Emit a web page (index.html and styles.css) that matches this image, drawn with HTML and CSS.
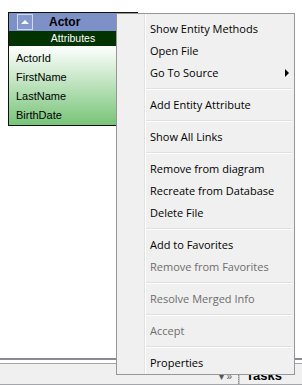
FILE: index.html
```html
<!DOCTYPE html>
<html lang="en">
<head>
    <meta charset="UTF-8">
    <title>Diagram - Actor</title>
    <link rel="stylesheet" href="styles.css">
</head>
<body>

    <div class="canvas">
        <!-- Entity node -->
        <div class="entity">
            <div class="entity-head">
                <span class="collapse-btn"><span class="tri-up"></span></span>
                <span class="entity-title">Actor</span>
            </div>
            <div class="entity-section">Attributes</div>
            <div class="entity-rows">
                <div class="entity-row">ActorId</div>
                <div class="entity-row">FirstName</div>
                <div class="entity-row">LastName</div>
                <div class="entity-row">BirthDate</div>
            </div>
        </div>
    </div>

    <!-- Dock at the bottom -->
    <div class="dock">
        <div class="dock-panel">
            <span class="dock-glyph">&#9662;</span>
            <span class="dock-glyph">&raquo;</span>
            <span class="dock-sep"></span>
            <span class="dock-tab">Tasks</span>
        </div>
    </div>

    <!-- Context menu -->
    <ul class="context-menu">
        <li class="menu-item">Show Entity Methods</li>
        <li class="menu-item">Open File</li>
        <li class="menu-item has-sub">Go To Source</li>
        <li class="menu-sep"></li>
        <li class="menu-item">Add Entity Attribute</li>
        <li class="menu-sep"></li>
        <li class="menu-item">Show All Links</li>
        <li class="menu-sep"></li>
        <li class="menu-item">Remove from diagram</li>
        <li class="menu-item">Recreate from Database</li>
        <li class="menu-item">Delete File</li>
        <li class="menu-sep"></li>
        <li class="menu-item">Add to Favorites</li>
        <li class="menu-item disabled">Remove from Favorites</li>
        <li class="menu-sep"></li>
        <li class="menu-item disabled">Resolve Merged Info</li>
        <li class="menu-sep"></li>
        <li class="menu-item disabled">Accept</li>
        <li class="menu-sep"></li>
        <li class="menu-item">Properties</li>
    </ul>

</body>
</html>
```

FILE: styles.css
```css
/* General */
body {
    margin: 0;
    height: 385px;
    overflow: hidden;
    display: flex;
    flex-direction: column;
    background: #ffffff;
    font-family: 'Liberation Sans', Arial, sans-serif;
    position: relative;
}

.canvas {
    flex: 1;
    position: relative;
    background: #ffffff;
}

/* Entity node */
.entity {
    position: absolute;
    left: 8px;
    top: 12px;
    width: 128px;
    border: 1px solid #111111;
}

.entity-head {
    height: 18px;
    background: #7d90c8;
    display: flex;
    align-items: center;
    padding-left: 8px;
}

.collapse-btn {
    width: 14px;
    height: 14px;
    border: 1px solid #d2d9ef;
    background: #8598cd;
    display: flex;
    align-items: center;
    justify-content: center;
}

.tri-up {
    width: 0;
    height: 0;
    border-left: 4px solid transparent;
    border-right: 4px solid transparent;
    border-bottom: 4px solid #ffffff;
    margin-top: -1px;
}

.entity-title {
    margin-left: 16px;
    font-size: 12px;
    font-weight: bold;
    color: #000000;
}

.entity-section {
    height: 15px;
    line-height: 15px;
    background: #013301;
    color: #ffffff;
    font-size: 10.5px;
    text-align: center;
}

.entity-rows {
    padding-top: 3px;
    background: linear-gradient(to bottom, #ffffff, #78c478);
}

.entity-row {
    height: 19px;
    line-height: 19px;
    padding-left: 7px;
    font-size: 11px;
    color: #000000;
}

/* Dock */
.dock {
    border-top: 2px solid #8a8a92;
    padding-top: 3px;
    background: #ffffff;
}

.dock-panel {
    height: 20px;
    border-top: 1px solid #a4a4ac;
    border-bottom: 1px solid #a4a4ac;
    background: #f0f0f0;
    display: flex;
    align-items: flex-end;
    justify-content: flex-end;
    padding-right: 20px;
}

.dock-glyph {
    font-size: 10px;
    color: #555555;
    margin-left: 3px;
    line-height: 14px;
}

.dock-sep {
    width: 1px;
    height: 10px;
    background: #c8c8c8;
    margin: 0 6px 0 6px;
    border-left: 1px dotted #888888;
}

.dock-tab {
    font-size: 13px;
    font-weight: bold;
    line-height: 16px;
    color: #000000;
}

/* Context menu */
.context-menu {
    position: absolute;
    left: 116px;
    top: 13px;
    width: 177px;
    margin: 0;
    padding: 4px 0 0 0;
    list-style: none;
    background: #f0f0f0 linear-gradient(to right, transparent 27px, #e2e3e3 27px, #e2e3e3 28px, #ffffff 28px, #ffffff 29px, transparent 29px);
    border: 1px solid #979797;
    font-family: 'Open Sans', 'Noto Sans', sans-serif;
    font-size: 11px;
    color: #000000;
    z-index: 5;
}

.menu-item {
    position: relative;
    height: 22px;
    line-height: 22px;
    padding-left: 33px;
    white-space: nowrap;
}

.menu-item.disabled {
    color: #6d6d6d;
}

.menu-item.has-sub::after {
    content: "";
    position: absolute;
    right: 5px;
    top: 7px;
    border-top: 4px solid transparent;
    border-bottom: 4px solid transparent;
    border-left: 4px solid #000000;
}

.menu-sep {
    height: 10px;
    margin-left: 29px;
    margin-right: 2px;
    background: linear-gradient(to bottom, transparent 4px, #e0e0e0 4px, #e0e0e0 5px, #ffffff 5px, #ffffff 6px, transparent 6px);
}
```
